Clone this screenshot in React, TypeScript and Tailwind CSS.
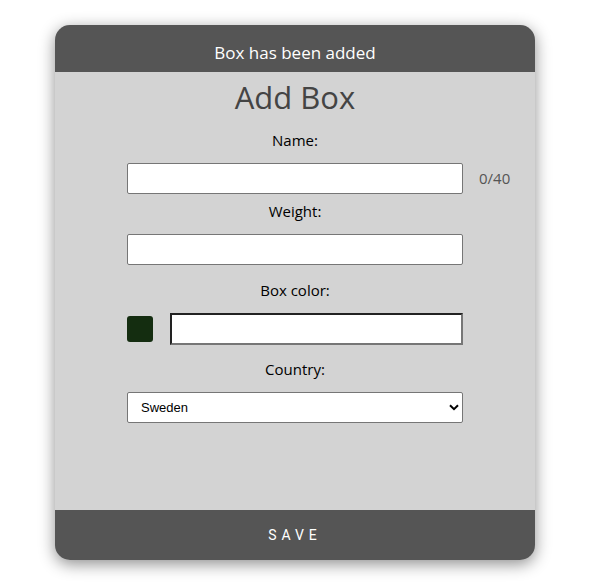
import React from "react";

export default function App() {
  const font = { fontFamily: '"Open Sans", "Noto Sans", sans-serif' };
  return (
    <div className="w-[616px] h-[583px] bg-white pt-[25px] pl-[55px]" style={font}>
      <div className="w-[480px] h-[535px] rounded-[15px] overflow-hidden flex flex-col bg-[#d3d3d3] shadow-[0_4px_16px_rgba(0,0,0,0.45)]">
        <div className="h-[47px] bg-[#555555] text-white text-[17px] flex items-center justify-center pt-[8px]">
          Box has been added
        </div>
        <div className="flex-1 flex flex-col items-center">
          <h1 className="text-[31px] text-[#444] leading-none mt-[10px]">Add Box</h1>
          <label className="text-[15px] text-black mt-[20px] leading-none">Name:</label>
          <div className="relative mt-[15px]">
            <input className="w-[336px] h-[31px] bg-white border border-[#767676] rounded-[2px]" />
            <span className="absolute left-[352px] top-[4px] text-[15px] text-[#555]">0/40</span>
          </div>
          <label className="text-[15px] text-black mt-[10px] leading-none">Weight:</label>
          <input className="w-[336px] h-[31px] bg-white border border-[#767676] rounded-[2px] mt-[15px]" />
          <label className="text-[15px] text-black mt-[18px] leading-none">Box color:</label>
          <div className="w-[336px] flex items-center mt-[15px]">
            <div className="w-[26px] h-[26px] bg-[#142d10] rounded-[3px]" />
            <input className="ml-[17px] flex-1 h-[32px] bg-white border-2 border-t-[#222] border-l-[#222] border-r-[#767676] border-b-[#767676]" />
          </div>
          <label className="text-[15px] text-black mt-[17px] leading-none">Country:</label>
          <div className="relative mt-[15px]">
            <select
              className="w-[336px] h-[31px] bg-white border border-[#767676] rounded-[2px] text-[13px] pl-[13px] appearance-none text-black"
              style={{ fontFamily: '"Liberation Sans", Arial, sans-serif' }}
            >
              <option>Sweden</option>
            </select>
            <svg
              className="absolute right-[4px] top-[12px] pointer-events-none"
              width="10"
              height="7"
              viewBox="0 0 10 7"
            >
              <path d="M1 1.2 L5 5.2 L9 1.2" fill="none" stroke="#000" strokeWidth="2" />
            </svg>
          </div>
        </div>
        <div className="h-[50px] bg-[#555555] text-white flex items-center justify-center text-[14px] font-normal tracking-[0.35em]" style={{ fontFamily: 'Roboto, sans-serif' }}>
          SAVE
        </div>
      </div>
    </div>
  );
}
